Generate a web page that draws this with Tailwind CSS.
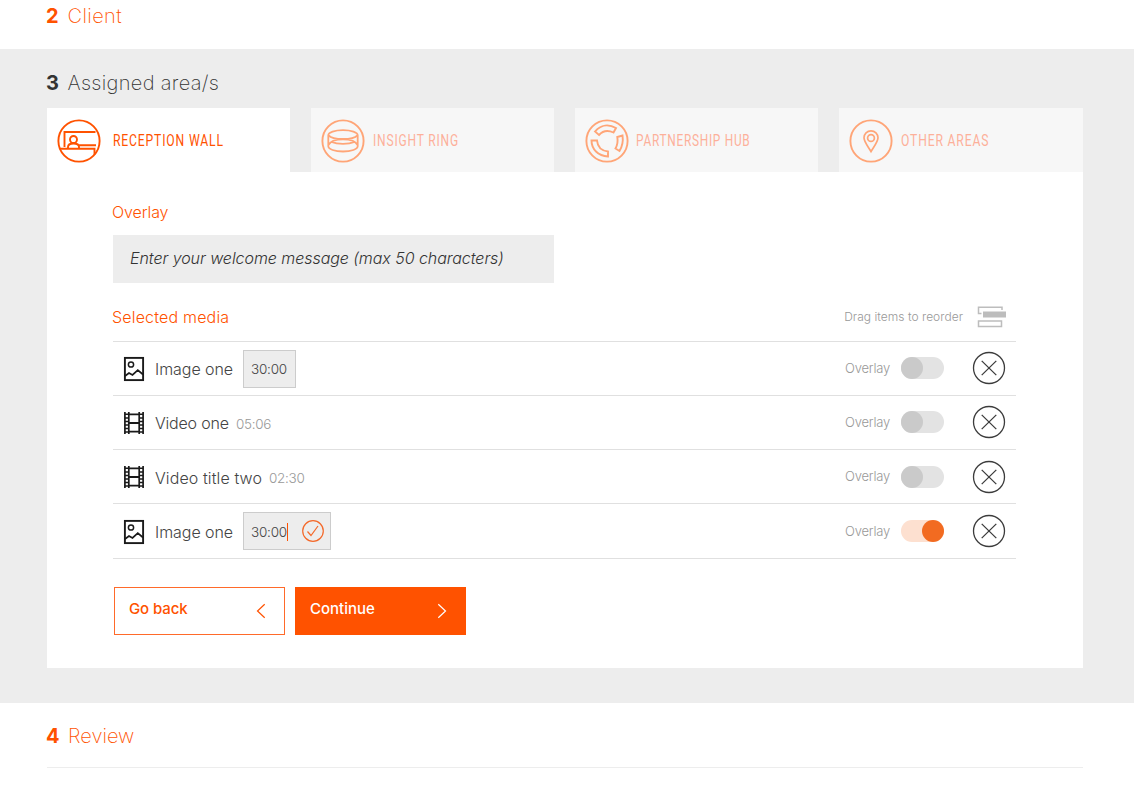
<!DOCTYPE html>
<html lang="en">
<head>
<meta charset="utf-8">
<title>Assigned areas</title>
<script src="https://cdn.jsdelivr.net/npm/@tailwindcss/browser@4"></script>
</head>
<body class="h-[785px] w-[1134px] overflow-hidden bg-white font-['Inter',sans-serif] font-light text-[#333]">
<svg class="hidden">
  <symbol id="image" viewBox="0 0 22 26"><g fill="none" stroke="#1a1a1a"><rect x="1.900" y="1.900" width="18.200" height="22.200" stroke-width="1.900"/><circle cx="8" cy="8.500" r="2.600" stroke-width="1.500"/><path d="M2 20l4-3 3.500 2 5.300-4.800L20 18.500" stroke-width="1.700"/></g></symbol>
  <symbol id="film" viewBox="0 0 22 24"><g fill="none" stroke="#1a1a1a"><path d="M1.900 1v22M5.800 1v22M16.200 1v22M20.100 1v22" stroke-width="1.700"/><path d="M2 3.300h4M2 7h4M2 10.500h4M2 14h4M2 17.500h4M2 21h4M16 3.300h4M16 7h4M16 10.500h4M16 14h4M16 17.500h4M16 21h4" stroke-width="1.400"/><path d="M6 3.300h10M6 12h10M6 20.700h10" stroke-width="1.800"/></g></symbol>
  <symbol id="remove" viewBox="0 0 34 34"><g fill="none" stroke="#3c3c3c" stroke-width="1.300"><circle cx="17" cy="17" r="15.500"/><path d="M9.700 9.900l14.600 14.200M24.300 9.900L9.700 24.100"/></g></symbol>
</svg>

<section class="flex h-[49px] items-start pl-[46px] pt-[2px] text-[20px] leading-[29px] text-[#ff5200]">
  <b class="w-[21.500px] font-bold">2</b><span class="font-extralight tracking-[.4px]">Client</span>
</section>

<main class="h-[654px] bg-[#ededed] pl-[47px] pr-[51px] pt-[20px]">
  <h2 class="-ml-px flex text-[20px] leading-[29px]"><b class="w-[21.500px] font-bold">3</b><span class="font-extralight tracking-[.32px]">Assigned area/s</span></h2>

  <nav class="mt-[10px] flex h-[64px] gap-[21px] font-['Roboto',sans-serif] text-[16px] font-normal text-[#fdb09a]">
    <div class="flex w-[243px] items-center bg-white pl-[10px] pt-px text-[#ff5200]">
      <svg class="size-[44px]" viewBox="0 0 44 44" fill="none" stroke="#ff5200" stroke-width="1.900"><circle cx="22" cy="22" r="20.600"/><path d="M38.500 13H7.500v15M39 26.300H21M3 29.700h34.500v6M11 29.500v-1.500c0-2 2-3.500 5.500-3.500s5.500 1.500 5.500 3.500v1.500"/><circle cx="16.500" cy="20.500" r="3.500"/></svg>
      <span class="ml-[12px] inline-block origin-left scale-x-[.76] whitespace-nowrap pt-px tracking-[1.100px]">RECEPTION WALL</span>
    </div>
    <div class="flex w-[243px] items-center bg-[#f7f7f7] pl-[10px] pt-px">
      <svg class="size-[44px]" viewBox="0 0 44 44" fill="none" stroke="#ffa577" stroke-width="1.900"><circle cx="22" cy="22" r="20.600"/><path d="M7.300 16.300c0-3 6.500-5.200 14.700-5.200s14.700 2.200 14.700 5.200v11c0 2.900-6.500 5.200-14.700 5.200S7.300 30.200 7.300 27.300zM7.600 16.300c2 2.300 7.500 3.700 14.400 3.700s12.400-1.400 14.400-3.700M7.600 26c1.500-3.500 7-5.700 14.400-5.700s12.900 2.200 14.400 5.700M10.500 22.900c2.900 1.300 7.200 2 11.500 2s8.600-.700 11.500-2" stroke-width="1.800"/></svg>
      <span class="ml-[7.500px] inline-block origin-left scale-x-[.75] whitespace-nowrap pt-px tracking-[1.100px]">INSIGHT RING</span>
    </div>
    <div class="flex w-[243px] items-center bg-[#f7f7f7] pl-[10px] pt-px">
      <svg class="size-[44px]" viewBox="0 0 44 44" fill="none" stroke="#ffa577" stroke-width="1.900"><circle cx="22" cy="22" r="20.600"/><path d="M10 12.500C16 5.500 24 5 31 9L28.500 13.500C23 11 18 11.500 14 16ZM37.500 16.500C38.500 23 37.500 27 34.500 32L30.500 29.500C32.700 25.500 33 22 32.300 18ZM6.500 21.500H12C12.500 27.500 16.500 31.700 23 32.500V37.500C13 37 6.500 30 6.500 21.500Z"/></svg>
      <span class="ml-[6.500px] inline-block origin-left scale-x-[.74] whitespace-nowrap pt-px tracking-[1px]">PARTNERSHIP HUB</span>
    </div>
    <div class="flex w-[244px] items-center bg-[#f7f7f7] pl-[10px] pt-px">
      <svg class="size-[44px]" viewBox="0 0 44 44" fill="none" stroke="#ffa577" stroke-width="1.900"><circle cx="22" cy="22" r="20.600"/><path d="M22 32.500C19.500 28 15 23 15 18.800a7 7 0 0 1 14 0C29 23 24.500 28 22 32.500Z" stroke-width="1.700"/><circle cx="22" cy="19" r="3.400" stroke-width="1.700"/></svg>
      <span class="ml-[7.500px] inline-block origin-left scale-x-[.76] whitespace-nowrap pt-px tracking-[1.100px]">OTHER AREAS</span>
    </div>
  </nav>

  <div class="h-[496px] bg-white pl-[66px] pr-[67px] pt-[28px]">
    <h3 class="-ml-px text-[16px] leading-6 tracking-[-.1px] text-[#ff5200]">Overlay</h3>
    <div class="mt-[11px] flex h-[48px] w-[441px] items-center bg-[#ededed] pb-[2px] pl-[17px] text-[16px] italic tracking-[-.05px]">Enter your welcome message (max 50 characters)</div>
    <div class="mt-[18px] flex h-[41px] items-center justify-between border-b border-[#e0e0e0] pb-[9px]">
      <h3 class="-ml-px text-[16px] leading-6 tracking-[.18px] text-[#ff5200]">Selected media</h3>
      <div class="flex items-center pr-[9px] text-[12px] tracking-[.03px] text-[#999]"><span>Drag items to reorder</span>
        <svg class="ml-[14px] h-[22px] w-[30px]" viewBox="0 0 30 22" fill="none" stroke="#bdbdbd" stroke-width="1.500"><path d="M4.500 7.500H1.500V1.300h23.500V4M1.500 15h23v5.500h-23z"/><path d="M6 5.500h23v6H6z" fill="#bdbdbd" stroke="none"/></svg>
      </div>
    </div>

    <ul class="text-[16px] text-[#444]">
      <li class="flex h-[54px] items-center border-b border-[#e0e0e0] px-[10px] pb-px">
        <svg class="mt-px h-[26px] w-[22px]"><use href="#image"/></svg><span class="ml-[10px] w-[78px] whitespace-nowrap pt-px tracking-[-.05px]">Image one</span>
        <div class="ml-[10px] mt-[2px] flex h-[38px] w-[53px] items-center border border-[#ccc] bg-[#ededed] pl-[7px] text-[13.500px] tracking-[-.2px]">30:00</div>
        <span class="ml-auto pt-px text-[13px] tracking-[-.2px] text-[#999]">Overlay</span>
        <i class="ml-[11px] flex h-[22px] w-[43px] rounded-full bg-[#e3e3e3]"><i class="size-[22px] rounded-full bg-[#cacaca]"></i></i>
        <svg class="ml-[28px] size-[34px]"><use href="#remove"/></svg>
      </li>
      <li class="flex h-[54px] items-center border-b border-[#e0e0e0] px-[10px] pb-px">
        <svg class="mt-[2px] h-[24px] w-[22px]"><use href="#film"/></svg><span class="ml-[10px] w-[74px] whitespace-nowrap pt-px tracking-[-.2px]">Video one</span>
        <span class="ml-[7px] pt-[4px] text-[13.500px] tracking-[-.3px] text-[#999]">05:06</span>
        <span class="ml-auto pt-px text-[13px] tracking-[-.2px] text-[#999]">Overlay</span>
        <i class="ml-[11px] flex h-[22px] w-[43px] rounded-full bg-[#e3e3e3]"><i class="size-[22px] rounded-full bg-[#cacaca]"></i></i>
        <svg class="ml-[28px] size-[34px]"><use href="#remove"/></svg>
      </li>
      <li class="flex h-[54px] items-center border-b border-[#e0e0e0] px-[10px]">
        <svg class="h-[24px] w-[22px]"><use href="#film"/></svg><span class="ml-[10px] w-[107px] whitespace-nowrap pt-[2px] tracking-[.1px]">Video title two</span>
        <span class="ml-[7px] pt-[4px] text-[13.500px] tracking-[-.3px] text-[#999]">02:30</span>
        <span class="ml-auto pt-px text-[13px] tracking-[-.2px] text-[#999]">Overlay</span>
        <i class="ml-[11px] flex h-[22px] w-[43px] rounded-full bg-[#e3e3e3]"><i class="size-[22px] rounded-full bg-[#cacaca]"></i></i>
        <svg class="ml-[28px] size-[34px]"><use href="#remove"/></svg>
      </li>
      <li class="flex h-[55px] items-center border-b border-[#e0e0e0] px-[10px]">
        <svg class="mt-[2px] h-[26px] w-[22px]"><use href="#image"/></svg><span class="ml-[10px] w-[78px] whitespace-nowrap pt-px tracking-[-.05px]">Image one</span>
        <div class="ml-[10px] flex h-[38px] w-[88px] items-center border border-[#ccc] bg-[#ededed] pl-[7px]"><span class="w-[36px] pt-[2px] text-[13.500px] tracking-[-.2px]">30:00</span><i class="mt-[2px] h-[18px] w-px bg-[#ff5200]"></i>
        <svg class="ml-[13px] size-[24px]" viewBox="0 0 24 24" fill="none" stroke="#f4692a" stroke-width="1.200"><circle cx="12" cy="12" r="10.300"/><path d="M6.500 12.500l3.500 4 7-9.500"/></svg></div>
        <span class="ml-auto pt-px text-[13px] tracking-[-.2px] text-[#999]">Overlay</span>
        <i class="ml-[11px] flex h-[22px] w-[43px] justify-end rounded-full bg-[#fde0d0]"><i class="size-[22px] rounded-full bg-[#f26b21]"></i></i>
        <svg class="ml-[28px] size-[34px]"><use href="#remove"/></svg>
      </li>
    </ul>

    <div class="mt-[28px] ml-px flex gap-[10px] text-[15px] font-medium">
      <button class="flex h-[48px] w-[171px] items-center justify-between border border-[#ff6a2a] pl-[14px] pr-[18px] text-[#ff5200]"><span class="pb-[3px] tracking-[-.1px]">Go back</span><svg class="h-[16px] w-[10px]" viewBox="0 0 10 16" fill="none" stroke="#ff5200" stroke-width="1.200"><path d="M8.700 1.200L1.500 8l7.200 6.800"/></svg></button>
      <button class="flex h-[48px] w-[171px] items-center justify-between bg-[#ff5200] pl-[15px] pr-[19px] text-white"><span class="pb-[3px]">Continue</span><svg class="h-[16px] w-[10px]" viewBox="0 0 10 16" fill="none" stroke="#fff" stroke-width="1.200"><path d="M1.300 1.200L8.500 8l-7.200 6.800"/></svg></button>
    </div>
  </div>
</main>

<section class="ml-[47px] mr-[51px] flex h-[65px] border-b border-[#ededed] pt-[19px] text-[20px] leading-[29px] text-[#ff5200]">
  <b class="-ml-px w-[22px] font-bold">4</b><span class="font-extralight">Review</span>
</section>
</body>
</html>
